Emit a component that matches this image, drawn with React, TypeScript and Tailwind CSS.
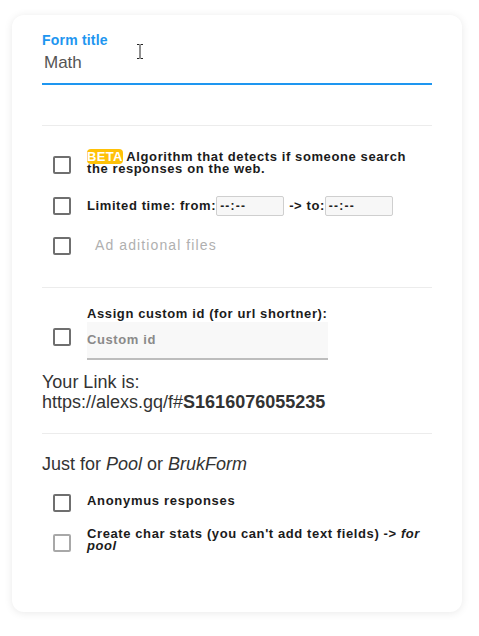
import React from "react";

function Box({ light = false }: { light?: boolean }) {
  return (
    <div
      className={
        "w-[18px] h-[18px] shrink-0 rounded-[2px] border-2 bg-white " +
        (light ? "border-[#a8a8a8]" : "border-[#6f6f6f]")
      }
    />
  );
}

function TimeBox() {
  return (
    <span className="inline-flex items-center w-[68px] h-[20px] bg-[#f7f7f7] border border-[#cfcfcf] rounded-[2px] px-[3px] text-[12px] font-bold text-[#222] tracking-[1.2px] align-middle">
      --:--
    </span>
  );
}

export default function App() {
  return (
    <div className="min-h-[636px] bg-white pt-[15px] pl-[12px]" style={{ fontFamily: '"Liberation Sans", Arial, sans-serif' }}>
      <div className="w-[450px] h-[597px] rounded-[12px] bg-white shadow-[0_1px_8px_rgba(0,0,0,0.09)] px-[30px] pt-[16px]">
        {/* Form title */}
        <div className="relative border-b-2 border-[#1e96f0] pb-[10px]">
          <div className="text-[14px] font-bold text-[#1e96f0] leading-[18px] tracking-[0.2px]">Form title</div>
          <div className="text-[17px] text-[#555] leading-[20px] mt-[4px] pl-[2px]">Math</div>
          <svg className="absolute left-[94px] top-[13px]" width="8" height="15" viewBox="0 0 8 15">
            <path d="M1 0.5h2.5M4.5 0.5H7M4 1v13M1 14.5h2.5M4.5 14.5H7" stroke="#222" strokeWidth="1" fill="none" />
          </svg>
        </div>

        <div className="h-[41px] border-b border-[#ececec]" />

        {/* Options */}
        <div className="pl-[11px] pt-[28px] pb-[31px] border-b border-[#ececec]">
          <div className="flex items-center gap-[16px]">
            <Box />
            <div className="text-[13px] font-bold text-[#1b1b1b] leading-[12px] tracking-[0.6px] -mt-[3px]">
              <span className="bg-[#ffc107] text-white rounded-[4px] tracking-[0.3px]">BETA</span> Algorithm that detects if someone search
              <br />
              the responses on the web.
            </div>
          </div>
          <div className="flex items-center gap-[16px] mt-[21px]">
            <Box />
            <div className="text-[13px] font-bold text-[#1b1b1b] tracking-[0.6px] flex items-center">
              <span>Limited time: from:</span>
              <TimeBox />
              <span className="ml-[5px]">-&gt; to:</span>
              <TimeBox />
            </div>
          </div>
          <div className="flex items-center gap-[16px] mt-[19px]">
            <Box />
            <div className="text-[14px] text-[#b0b0b0] tracking-[1.1px] pl-[8px]">Ad aditional files</div>
          </div>
        </div>

        {/* Custom id */}
        <div className="pl-[11px] pt-[18px] flex items-start gap-[16px]">
          <div className="mt-[22px]">
            <Box />
          </div>
          <div>
            <div className="text-[13px] font-bold text-[#1b1b1b] tracking-[0.6px] leading-[16px]">
              Assign custom id (for url shortner):
            </div>
            <div className="w-[241px] h-[38px] bg-[#f8f8f8] border-b-2 border-[#bdbdbd] flex items-center text-[13px] font-bold text-[#8a8a8a] tracking-[0.6px]">
              Custom id
            </div>
          </div>
        </div>

        <div className="pt-[12px] pb-[21px] border-b border-[#ececec] text-[18px] text-[#333] leading-[20px]">
          <div>Your Link is:</div>
          <div>
            https://alexs.gq/f#<b>S1616076055235</b>
          </div>
        </div>

        <div className="pt-[20px] text-[18px] text-[#333] leading-[20px]">
          Just for <i>Pool</i> or <i>BrukForm</i>
        </div>

        <div className="pl-[11px] pt-[20px]">
          <div className="flex items-center gap-[16px]">
            <Box />
            <div className="text-[13px] font-bold text-[#1b1b1b] tracking-[0.7px] -mt-[5px]">Anonymus responses</div>
          </div>
          <div className="flex items-center gap-[16px] mt-[21px]">
            <Box light />
            <div className="text-[13px] font-bold text-[#1b1b1b] leading-[12px] tracking-[0.6px] -mt-[5px]">
              Create char stats (you can't add text fields) -&gt; <i>for</i>
              <br />
              <i>pool</i>
            </div>
          </div>
        </div>
      </div>
    </div>
  );
}
